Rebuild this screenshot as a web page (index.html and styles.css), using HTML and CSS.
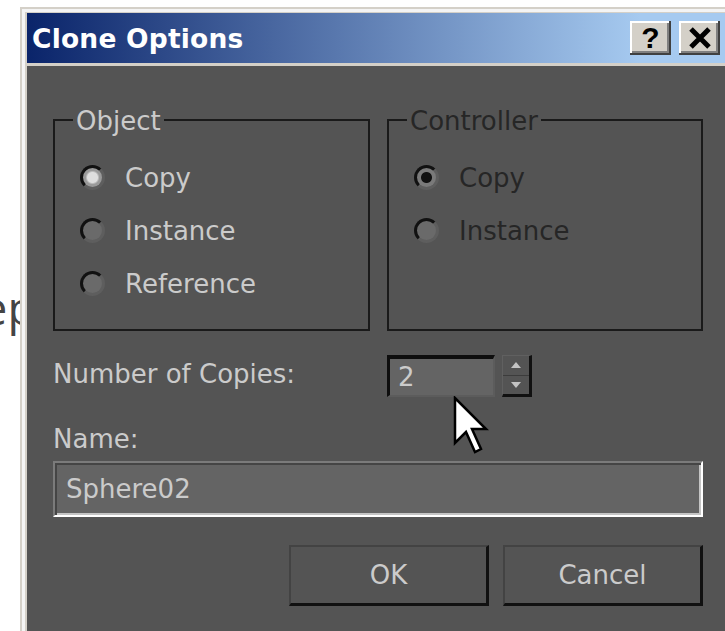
FILE: index.html
```html
<!DOCTYPE html>
<html lang="en">
<head>
<meta charset="utf-8">
<title>Clone Options</title>
<link rel="stylesheet" href="styles.css">
</head>
<body>
  <div class="page">
    <p class="page-line">Step</p>
  </div>

  <div class="window">
    <div class="frame-hi">
      <div class="frame-face">
        <div class="titlebar">
          <span class="title">Clone Options</span>
          <div class="caption-buttons">
            <button class="cap-btn help">?</button>
            <button class="cap-btn close">
              <svg width="24" height="22" viewBox="0 0 24 22">
                <path d="M3 2 L21 20 M21 2 L3 20" stroke="#000" stroke-width="5" fill="none"/>
              </svg>
            </button>
          </div>
        </div>

        <div class="dialog-body">
          <div class="content">
            <div class="groups">
              <div class="group">
                <span class="group-title">Object</span>
                <div class="options">
                  <div class="radio-row"><span class="radio checked"></span>Copy</div>
                  <div class="radio-row"><span class="radio"></span>Instance</div>
                  <div class="radio-row"><span class="radio"></span>Reference</div>
                </div>
              </div>
              <div class="group disabled">
                <span class="group-title">Controller</span>
                <div class="options">
                  <div class="radio-row"><span class="radio checked"></span>Copy</div>
                  <div class="radio-row"><span class="radio"></span>Instance</div>
                </div>
              </div>
            </div>

            <div class="copies-row">
              <span class="label copies-label">Number of Copies:</span>
              <div class="spin-field">2</div>
              <div class="spin-arrows">
                <span class="spin-btn"><span class="tri up"></span></span>
                <span class="spin-btn"><span class="tri down"></span></span>
              </div>
            </div>

            <div class="label name-label">Name:</div>
            <div class="name-field">Sphere02</div>

            <div class="actions">
              <button class="btn">OK</button>
              <button class="btn">Cancel</button>
            </div>
          </div>
        </div>
      </div>
    </div>
  </div>

  <svg class="cursor" width="36" height="60" viewBox="0 0 36 60">
    <path d="M2 2 L2 47 L13 36 L22 56 L28 53 L19 33 L33 33 Z" fill="#fff" stroke="#000" stroke-width="2.5" stroke-linejoin="miter"/>
  </svg>
</body>
</html>
```

FILE: styles.css
```css
html, body {
  margin: 0;
  padding: 0;
}

body {
  width: 725px;
  height: 631px;
  overflow: hidden;
  background: #ffffff;
  position: relative;
  font-family: "DejaVu Sans", sans-serif;
}

/* page text sitting behind the dialog */
.page {
  padding-top: 277px;
}

.page-line {
  margin: 0;
  text-indent: -60px;
  font-family: "Open Sans", sans-serif;
  font-size: 46px;
  line-height: 60px;
  color: #444444;
}

/* dialog window */
.window {
  position: absolute;
  left: 20px;
  top: 7px;
  width: 720px;
  height: 640px;
  box-sizing: border-box;
  background: #d4d0c8;
  padding: 2px 0 0 2px;
}

.frame-hi {
  height: 100%;
  box-sizing: border-box;
  background: #f4f4f4;
  padding: 3px 0 0 3px;
}

.frame-face {
  height: 100%;
  box-sizing: border-box;
  background: #d4d0c8;
  padding: 1px 0 0 2px;
  display: flex;
  flex-direction: column;
}

.titlebar {
  height: 50px;
  flex: none;
  display: flex;
  align-items: center;
  justify-content: space-between;
  padding: 0 20px 0 5px;
  background: linear-gradient(to right, #0a246a 0%, #a6caf0 86%);
}

.title {
  color: #ffffff;
  font-weight: bold;
  font-size: 26.5px;
  letter-spacing: 0.2px;
}

.caption-buttons {
  display: flex;
  gap: 8px;
}

.cap-btn {
  width: 41px;
  height: 34px;
  padding: 0;
  border: none;
  background: #d4d0c8;
  box-shadow: inset -2px -2px #404040, inset 2px 2px #ffffff, inset -4px -4px #808080;
  display: flex;
  align-items: center;
  justify-content: center;
  font-family: "Liberation Sans", sans-serif;
  font-weight: bold;
  font-size: 30px;
  line-height: 1;
  color: #000000;
}

.dialog-body {
  flex: 1;
  margin-top: 3px;
  background: #545454;
  padding: 53px 0 0 26px;
  color: #cbcbcb;
  font-size: 26px;
}

.content {
  width: 650px;
}

/* group boxes */
.groups {
  display: flex;
  gap: 17px;
}

.group {
  width: 317px;
  height: 212px;
  box-sizing: border-box;
  border: 2px solid #1a1a1a;
}

.group + .group {
  width: 316px;
}

.group-title {
  display: block;
  width: fit-content;
  margin: -15px 0 0 18px;
  padding: 0 3px;
  background: #545454;
  line-height: 30px;
}

.options {
  padding: 15px 0 0 25px;
}

.radio-row {
  height: 53px;
  display: flex;
  align-items: center;
}

.radio {
  width: 25px;
  height: 25px;
  box-sizing: border-box;
  border-radius: 50%;
  border: 3px solid;
  border-color: #111111 #5e5e5e #5e5e5e #111111;
  background: #6a6a6a;
  margin-right: 20px;
  flex: none;
}

.radio.checked {
  background: radial-gradient(circle, #dedede 0 5px, #9a9a9a 7px);
}

.disabled {
  color: #262626;
}

.disabled .radio.checked {
  background: radial-gradient(circle, #111111 0 5px, #7a7a7a 6px);
}

/* number of copies */
.copies-row {
  margin-top: 24px;
  height: 42px;
  display: flex;
  align-items: center;
}

.copies-label {
  width: 334px;
  padding-bottom: 5px;
}

.spin-field {
  width: 108px;
  height: 42px;
  box-sizing: border-box;
  border-style: solid;
  border-width: 4px 2px 2px 3px;
  border-color: #0e0e0e #5c5c5c #5c5c5c #0e0e0e;
  background: #646464;
  padding-left: 8px;
  line-height: 36px;
}

.spin-arrows {
  width: 30px;
  height: 42px;
  margin-left: 7px;
  box-sizing: border-box;
  border-style: solid;
  border-width: 1px 3px 3px 1px;
  border-color: #606060 #111111 #111111 #606060;
  display: flex;
  flex-direction: column;
}

.spin-btn {
  flex: 1;
  display: flex;
  align-items: center;
  justify-content: center;
}

.spin-btn + .spin-btn {
  border-top: 1px solid #3c3c3c;
}

.tri {
  width: 0;
  height: 0;
  border-left: 5px solid transparent;
  border-right: 5px solid transparent;
}

.tri.up {
  border-bottom: 6px solid #c4c4c4;
}

.tri.down {
  border-top: 6px solid #c4c4c4;
}

/* name */
.name-label {
  margin-top: 27px;
  line-height: 30px;
}

.name-field {
  margin-top: 7px;
  height: 56px;
  box-sizing: border-box;
  border: 2px solid;
  border-color: #7b7b7b #ffffff #ffffff #7b7b7b;
  box-shadow: inset 2px 2px #454545, inset -2px -2px #c4c4c4;
  background: #646464;
  padding-left: 11px;
  display: flex;
  align-items: center;
}

/* OK / Cancel */
.actions {
  margin-top: 28px;
  display: flex;
  justify-content: flex-end;
  gap: 14px;
}

.btn {
  width: 200px;
  height: 61px;
  box-sizing: border-box;
  border-style: solid;
  border-width: 2px 3px 3px 2px;
  border-color: #434343 #111111 #111111 #434343;
  background: #545454;
  color: #cbcbcb;
  font-family: "DejaVu Sans", sans-serif;
  font-size: 26px;
  padding: 0;
}

/* mouse pointer over the dialog */
.cursor {
  position: absolute;
  left: 453px;
  top: 396px;
}
```
